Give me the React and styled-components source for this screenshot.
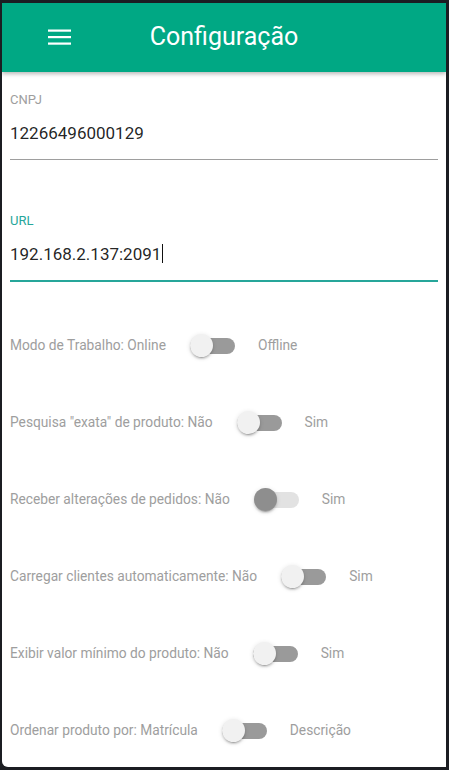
import React from "react";
import styled, { createGlobalStyle } from "styled-components";

const GlobalStyle = createGlobalStyle`
  html, body {
    margin: 0;
    padding: 0;
    background: #1b1d22;
  }
  * {
    box-sizing: border-box;
  }
`;

const FIELDS = [
  { label: "CNPJ", value: "12266496000129", focused: false },
  { label: "URL", value: "192.168.2.137:2091", focused: true }
];

const OPTIONS = [
  { off: "Modo de Trabalho: Online", on: "Offline" },
  { off: 'Pesquisa "exata" de produto: Não', on: "Sim" },
  { off: "Receber alterações de pedidos: Não", on: "Sim", disabled: true },
  { off: "Carregar clientes automaticamente: Não", on: "Sim" },
  { off: "Exibir valor mínimo do produto: Não", on: "Sim" },
  { off: "Ordenar produto por: Matrícula", on: "Descrição" }
];

const MenuIcon = () => (
  <svg width="24" height="16" viewBox="0 0 24 16" fill="#fff">
    <rect x="0" y="0.5" width="23" height="2.2" />
    <rect x="0" y="7" width="23" height="2.2" />
    <rect x="0" y="13.5" width="23" height="2.2" />
  </svg>
);

const Field = ({ label, value, focused }) => (
  <FieldBox>
    <FieldLabel focused={focused}>{label}</FieldLabel>
    <FieldValue focused={focused}>
      {value}
      {focused && <Caret />}
    </FieldValue>
  </FieldBox>
);

const Option = ({ off, on, disabled }) => (
  <OptionRow>
    <span>{off}</span>
    <Track disabled={disabled}>
      <Knob disabled={disabled} />
    </Track>
    <span>{on}</span>
  </OptionRow>
);

const App = () => {
  return (
    <>
      <GlobalStyle />
      <Frame>
        <Screen>
          <Header>
            <MenuButton>
              <MenuIcon />
            </MenuButton>
            <Title>Configuração</Title>
            <span />
          </Header>
          <Content>
            {FIELDS.map((f) => (
              <Field key={f.label} {...f} />
            ))}
            <OptionList>
              {OPTIONS.map((o) => (
                <Option key={o.off} {...o} />
              ))}
            </OptionList>
          </Content>
        </Screen>
      </Frame>
    </>
  );
};

const Frame = styled.div`
  width: 449px;
  height: 770px;
  padding: 3px 3px 3px 2px;
  background: #1b1d22;
  display: flex;
  font-family: Roboto, "Liberation Sans", sans-serif;
`;

const Screen = styled.div`
  flex: 1;
  background: #ffffff;
  border-bottom-left-radius: 6px;
  overflow: hidden;
  display: flex;
  flex-direction: column;
`;

const Header = styled.header`
  height: 69px;
  flex-shrink: 0;
  background: #00a884;
  display: grid;
  grid-template-columns: 1fr auto 1fr;
  align-items: center;
  padding-bottom: 2px;
  box-shadow: 0 2px 4px rgba(0, 0, 0, 0.28);
  position: relative;
  z-index: 1;
`;

const MenuButton = styled.div`
  padding-left: 46px;
  display: flex;
  align-items: center;
`;

const Title = styled.h1`
  margin: 0;
  font-size: 25px;
  font-weight: 400;
  color: #ffffff;
`;

const Content = styled.main`
  padding: 0 8px;
  display: flex;
  flex-direction: column;
`;

const FieldBox = styled.div`
  display: flex;
  flex-direction: column;
  padding-top: 20px;

  & + & {
    padding-top: 53px;
  }
`;

const FieldLabel = styled.label`
  font-size: 13px;
  line-height: 16px;
  color: ${(p) => (p.focused ? "#26a69a" : "#9e9e9e")};
`;

const FieldValue = styled.div`
  margin-top: 13px;
  font-size: 17px;
  line-height: 24px;
  color: rgba(0, 0, 0, 0.87);
  padding-bottom: 14px;
  border-bottom: ${(p) => (p.focused ? "2px solid #26a69a" : "1px solid #9e9e9e")};
`;

const Caret = styled.span`
  display: inline-block;
  width: 1px;
  height: 19px;
  margin-left: 1px;
  vertical-align: -3px;
  background: #111;
`;

const OptionList = styled.div`
  display: flex;
  flex-direction: column;
  gap: 53px;
  margin-top: 51px;
`;

const OptionRow = styled.div`
  height: 24px;
  display: flex;
  align-items: center;
  font-size: 13.75px;
  color: #9e9e9e;
`;

const Track = styled.div`
  width: 45px;
  height: 16px;
  margin: 1px 23px 0 24px;
  border-radius: 8px;
  background: ${(p) => (p.disabled ? "#e2e2e2" : "#9a9a9a")};
  display: flex;
  align-items: center;
`;

const Knob = styled.div`
  width: 23px;
  height: 23px;
  border-radius: 50%;
  background: ${(p) => (p.disabled ? "#8e8e8e" : "#f1f1f1")};
  box-shadow: 0 3px 1px -2px rgba(0, 0, 0, 0.2), 0 2px 2px 0 rgba(0, 0, 0, 0.14),
    0 1px 5px 0 rgba(0, 0, 0, 0.12);
`;

export default App;
